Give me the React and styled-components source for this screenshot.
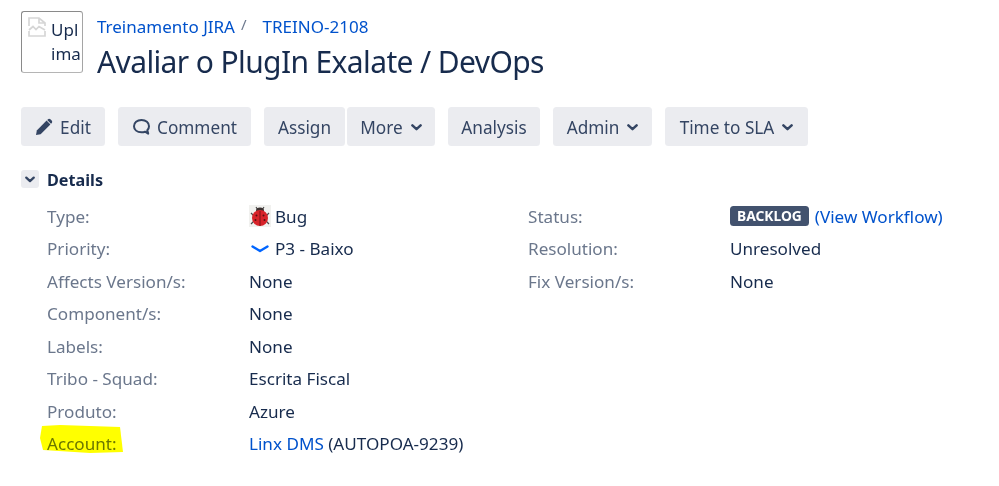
import React from "react";
import styled, { createGlobalStyle } from "styled-components";

const Global = createGlobalStyle`
  html, body { margin: 0; padding: 0; background: #fff; }
  body { font-family: "Noto Sans", "Open Sans", sans-serif; color: #172b4d; }
`;

const Page = styled.div`
  width: 999px;
  height: 486px;
  padding: 11px 0 0 21px;
  box-sizing: border-box;
  overflow: hidden;
`;

const Header = styled.header`
  display: flex;
  gap: 14px;
  height: 62px;
`;

const Avatar = styled.div`
  width: 62px;
  height: 62px;
  box-sizing: border-box;
  border: 1px solid #8a8a8a;
  border-bottom-color: #b5b5b5;
  border-right-color: #a5a5a5;
  border-radius: 3px;
  position: relative;
  overflow: hidden;
  font-size: 17px;
  line-height: 24px;
  color: #172b4d;
  padding: 6px 0 0 29px;
  white-space: pre;
`;

const BrokenImage = styled.svg`
  position: absolute;
  left: 6px;
  top: 5px;
`;

const Titles = styled.div`
  display: flex;
  flex-direction: column;
`;

const Breadcrumbs = styled.div`
  flex: none;
  display: flex;
  align-items: center;
  height: 30px;
  font-size: 17px;
`;

const Slash = styled.span`
  color: #6b778c;
  margin: 0 16px 5px 6px;
  font-size: 15px;
`;

const Link = styled.a`
  color: #0052cc;
  text-decoration: none;
`;

const Title = styled.h1`
  flex: none;
  margin: 1px 0 0;
  font-size: 30px;
  font-weight: 400;
  line-height: 40px;
  letter-spacing: -0.62px;
  white-space: nowrap;
`;

const Toolbar = styled.div`
  display: flex;
  gap: 13px;
  margin-top: 34px;
`;

const Group = styled.div`
  display: flex;
  gap: 2px;
`;

const Button = styled.button`
  display: flex;
  align-items: center;
  justify-content: center;
  gap: ${(p) => p.$gap || 0}px;
  width: ${(p) => p.$w}px;
  height: 39px;
  padding: 1px 0 0;
  border: 0;
  border-radius: 3.5px;
  background: #ebecf0;
  color: #344563;
  font-family: inherit;
  font-size: 17.2px;
`;

const Details = styled.section`
  margin-top: 24px;
`;

const SectionHead = styled.div`
  display: flex;
  align-items: center;
  gap: 8px;
  height: 18px;
`;

const Toggle = styled.span`
  display: flex;
  align-items: center;
  justify-content: center;
  width: 18px;
  height: 18px;
  border-radius: 3px;
  background: #ebecf0;
`;

const SectionTitle = styled.h2`
  margin: 1px 0 0;
  font-size: 16.2px;
  font-weight: 700;
  color: #172b4d;
`;

const Columns = styled.div`
  display: grid;
  grid-template-columns: 481px 1fr;
  margin: 12px 0 0 26px;
`;

const Row = styled.div`
  display: grid;
  grid-template-columns: 202px 1fr;
  align-items: center;
  height: 32.5px;
  font-size: 17.1px;
  white-space: nowrap;
`;

const Label = styled.span`
  position: relative;
  color: #6b778c;
`;

const Marker = styled.svg`
  position: absolute;
  left: -7px;
  top: -8px;
  mix-blend-mode: multiply;
`;

const Value = styled.span`
  display: flex;
  align-items: center;
  color: #172b4d;
`;

const IconSlot = styled.span`
  display: inline-flex;
  justify-content: center;
  width: 22px;
  margin-right: 4px;
`;

const Lozenge = styled.span`
  background: #42526e;
  color: #fff;
  border-radius: 3.5px;
  font-size: 13.8px;
  font-weight: 700;
  line-height: 20px;
  height: 20px;
  padding: 0 7px;
  margin-right: 6px;
`;

const Chevron = ({ color = "#344563", w = 11, h = 7 }) => (
  <svg width={w} height={h} viewBox="0 0 11 7" fill="none">
    <path d="M1.4 1.4 L5.5 5.2 L9.6 1.4" stroke={color} strokeWidth="2.5" strokeLinecap="round" strokeLinejoin="round" />
  </svg>
);

const LowPriority = () => (
  <svg width="18" height="8" viewBox="0 0 18 8" fill="none">
    <path d="M1.5 1.5 L9 6 L16.5 1.5" stroke="#0065ff" strokeWidth="2.4" strokeLinecap="round" strokeLinejoin="round" />
  </svg>
);

const Bug = () => (
  <svg width="22" height="22" viewBox="0 0 22 22">
    <rect width="22" height="22" fill="#f1f1ef" />
    <path d="M7 2 L9 5 M15 2 L13 5 M2 8 L5 11 M20 8 L17 11 M2 19 L5 16 M20 19 L17 16" stroke="#4a4a4a" strokeWidth="1.2" />
    <ellipse cx="11" cy="5.5" rx="4" ry="3" fill="#3a3030" />
    <ellipse cx="11" cy="13" rx="8" ry="8" fill="#d8232a" />
    <path d="M11 6 V21" stroke="#7a1515" strokeWidth="1" />
    <g fill="#5c1010">
      <circle cx="7.5" cy="10.5" r="1" />
      <circle cx="14.5" cy="10.5" r="1" />
      <circle cx="6.5" cy="15" r="1" />
      <circle cx="15.5" cy="15" r="1" />
    </g>
  </svg>
);

const Pencil = () => (
  <svg width="18" height="18" viewBox="0 0 18 18">
    <path d="M1 17 L1.8 12.4 L11.6 2.6 L15.4 6.4 L5.6 16.2 Z" fill="#344563" />
    <path d="M12.8 1.4 C13.6 .6 14.6 .6 15.4 1.3 L16.7 2.6 C17.4 3.4 17.4 4.4 16.6 5.2 L16 5.8 L12.2 2 Z" fill="#344563" />
  </svg>
);

const Bubble = () => (
  <svg width="19" height="18" viewBox="0 0 19 18" fill="none">
    <path d="M9.5 2 C5 2 2 4.7 2 8.2 C2 11.7 5 14.3 9.5 14.3 C10.6 14.3 12 14.1 13 13.7 L16.2 15.6 L15.3 12.2 C16.4 11.1 17 9.7 17 8.2 C17 4.7 14 2 9.5 2 Z" stroke="#344563" strokeWidth="2" strokeLinejoin="round" />
  </svg>
);

const left = [
  ["Type:", <><IconSlot><Bug /></IconSlot>Bug</>],
  ["Priority:", <><IconSlot><LowPriority /></IconSlot>P3 - Baixo</>],
  ["Affects Version/s:", "None"],
  ["Component/s:", "None"],
  ["Labels:", "None"],
  ["Tribo - Squad:", "Escrita Fiscal"],
  ["Produto:", "Azure"],
];

const right = [
  ["Status:", <><Lozenge>BACKLOG</Lozenge><Link href="#">(View Workflow)</Link></>],
  ["Resolution:", "Unresolved"],
  ["Fix Version/s:", "None"],
];

export default function App() {
  return (
    <Page>
      <Global />
      <Header>
        <Avatar>
          <BrokenImage width="18" height="20" viewBox="0 0 18 20" fill="none" stroke="#d6d6d6" strokeWidth="1.7">
            <path d="M1 9 V1 H11 L17 6 V9 M11 1 V6 H17 M1 13 L5 9.5 L8 12.5 L11 9.5 L17 13 M1 14 V19 H17 V14" />
          </BrokenImage>
          {"Upl\nima"}
        </Avatar>
        <Titles>
          <Breadcrumbs>
            <Link href="#">Treinamento JIRA</Link>
            <Slash>/</Slash>
            <Link href="#">TREINO-2108</Link>
          </Breadcrumbs>
          <Title>Avaliar o PlugIn Exalate / DevOps</Title>
        </Titles>
      </Header>
      <Toolbar>
        <Button $w={84} $gap={7}><Pencil />Edit</Button>
        <Button $w={133} $gap={6}><Bubble />Comment</Button>
        <Group>
          <Button $w={81}>Assign</Button>
          <Button $w={88} $gap={8}>More<Chevron /></Button>
        </Group>
        <Button $w={92}>Analysis</Button>
        <Button $w={99} $gap={8}>Admin<Chevron /></Button>
        <Button $w={143} $gap={8}>Time to SLA<Chevron /></Button>
      </Toolbar>
      <Details>
        <SectionHead>
          <Toggle><Chevron w={10} h={7} /></Toggle>
          <SectionTitle>Details</SectionTitle>
        </SectionHead>
        <Columns>
          <div>
            {left.map(([k, v]) => (
              <Row key={k}><Label>{k}</Label><Value>{v}</Value></Row>
            ))}
            <Row>
              <Label>
                <Marker width="84" height="29" viewBox="0 0 84 29">
                  <path d="M2 2 L20 1 L80 3 L83 28 L50 29 L3 26 L0 14 Z" fill="#ffff00" />
                </Marker>
                Account:
              </Label>
              <Value><Link href="#">Linx DMS</Link>&nbsp;(AUTOPOA-9239)</Value>
            </Row>
          </div>
          <div>
            {right.map(([k, v]) => (
              <Row key={k}><Label>{k}</Label><Value>{v}</Value></Row>
            ))}
          </div>
        </Columns>
      </Details>
    </Page>
  );
}
